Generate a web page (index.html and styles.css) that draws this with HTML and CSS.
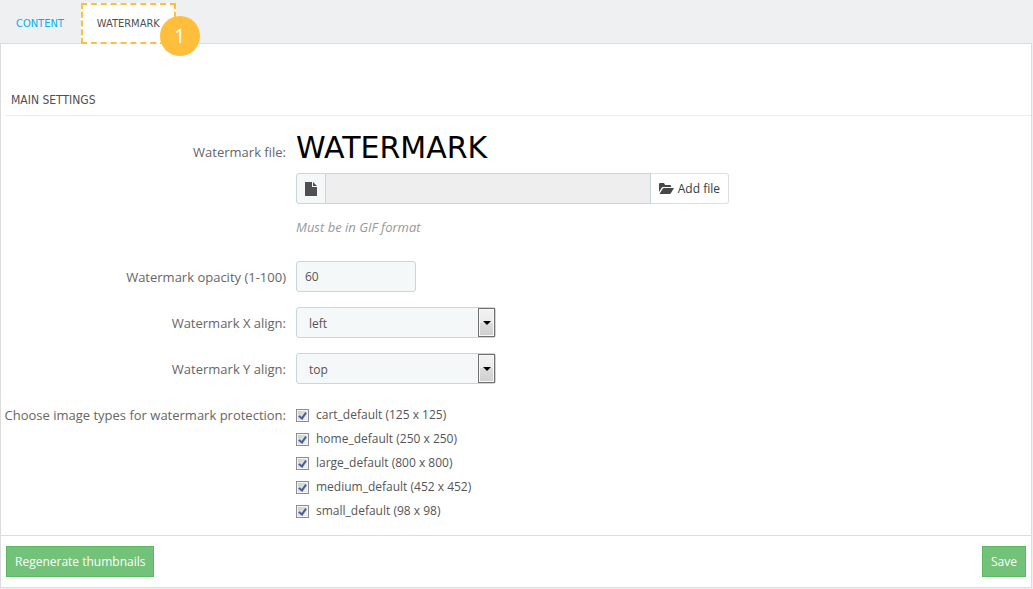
FILE: index.html
```html
<!DOCTYPE html>
<html lang="en">
<head>
<meta charset="utf-8">
<title>Watermark settings</title>
<link rel="stylesheet" href="styles.css">
</head>
<body>
<nav class="tabs">
  <a class="tab" href="#content">CONTENT</a>
  <a class="tab tab-active" href="#watermark">WATERMARK<span class="badge">1</span></a>
</nav>
<form class="panel">
  <h1 class="heading">MAIN SETTINGS</h1>
  <div class="fields">
    <div class="row row-file">
      <label class="label" for="file">Watermark file:</label>
      <div class="field">
        <div class="preview">WATERMARK</div>
        <div class="file-group">
          <span class="file-icon"><svg width="12" height="14" viewBox="0 0 12 14"><path fill="#505050" d="M0 0h7v5h5v9H0zM8 0l4 4H8z"/></svg></span>
          <input class="file-name" id="file" type="text" readonly>
          <button class="add-file" type="button"><svg width="15" height="12" viewBox="0 0 15 12"><path fill="#484848" d="M0 9V1q0-1 1-1h4l1 2h5q1 0 1 1v1H4Q3 4 2.500 5zM.5 11l3-5q.5-1 1.500-1h10l-3 5q-.5 1-1.500 1z"/></svg>Add file</button>
        </div>
        <p class="hint">Must be in GIF format</p>
      </div>
    </div>
    <div class="row">
      <label class="label" for="opacity">Watermark opacity (1-100)</label>
      <div class="field"><input class="opacity" id="opacity" type="text" value="60"></div>
    </div>
    <div class="row">
      <label class="label" for="xalign">Watermark X align:</label>
      <div class="field select-wrap"><select class="select" id="xalign"><option>left</option><option>middle</option><option>right</option></select><span class="arrow"><svg width="8" height="4" viewBox="0 0 8 4"><path d="M0 0h8L4 4z"/></svg></span></div>
    </div>
    <div class="row">
      <label class="label" for="yalign">Watermark Y align:</label>
      <div class="field select-wrap"><select class="select" id="yalign"><option>top</option><option>middle</option><option>bottom</option></select><span class="arrow"><svg width="8" height="4" viewBox="0 0 8 4"><path d="M0 0h8L4 4z"/></svg></span></div>
    </div>
    <div class="row row-types" role="group" aria-labelledby="types">
      <span class="label" id="types">Choose image types for watermark protection:</span>
      <div class="field types">
        <label class="type"><input class="check" type="checkbox" checked>cart_default (125 x 125)</label>
        <label class="type"><input class="check" type="checkbox" checked>home_default (250 x 250)</label>
        <label class="type"><input class="check" type="checkbox" checked>large_default (800 x 800)</label>
        <label class="type"><input class="check" type="checkbox" checked>medium_default (452 x 452)</label>
        <label class="type"><input class="check" type="checkbox" checked>small_default (98 x 98)</label>
      </div>
    </div>
  </div>
  <div class="footer">
    <button class="action" type="button">Regenerate thumbnails</button>
    <button class="action" type="submit">Save</button>
  </div>
</form>
</body>
</html>
```
FILE: styles.css
```css
* { box-sizing: border-box; }
body {
  margin: 0;
  background: #eff0f2;
  color: #666;
  font: 13px/18px "Open Sans", sans-serif;
}
input, select, button { font: inherit; margin: 0; }
svg { display: block; flex: none; }

.tabs {
  display: flex;
  gap: 3px;
  height: 43px;
  padding-top: 3px;
}
.tab {
  display: flex;
  align-items: center;
  height: 41px;
  padding: 0 14px 0 16px;
  color: #00aff0;
  font: 11px/18px "DejaVu Sans Condensed", "Open Sans", sans-serif;
  text-decoration: none;
}
.tab-active {
  position: relative;
  padding: 0 14px;
  background: #fff;
  border: 2px dashed #ffbf3c;
  color: #505050;
}
.badge {
  position: absolute;
  right: -26px;
  bottom: -14px;
  width: 40px;
  height: 40px;
  border-radius: 50%;
  background: #ffbf3c;
  color: #fff;
  font: 20px/40px "Open Sans", sans-serif;
  text-align: center;
}

.panel {
  margin-right: 1px;
  background: #fff;
  border: 1px solid #dcdcdc;
}
.heading {
  margin: 40px 0 0 5px;
  padding: 7px 5px 6px;
  border-bottom: 1px solid #eaedef;
  color: #505050;
  font: 12px/18px "DejaVu Sans Condensed", "Open Sans", sans-serif;
}
.fields {
  display: flex;
  flex-direction: column;
  gap: 15px;
  padding: 12px 3px 15px;
}
.row {
  display: flex;
  align-items: center;
  gap: 10px;
}
.row-file, .row-types { align-items: flex-start; }
.label {
  flex: none;
  width: 282px;
  text-align: right;
}
.row-file .label { padding-top: 15px; }
.row-file { padding-bottom: 10px; }
.preview {
  height: 45px;
  color: #000;
  font: 30px/40px "DejaVu Sans", sans-serif;
}
.file-group {
  display: flex;
  width: 433px;
  height: 31px;
}
.file-icon {
  display: flex;
  align-items: center;
  justify-content: center;
  width: 30px;
  background: #f5f8f9;
  border: 1px solid #c7d6db;
  border-radius: 3px 0 0 3px;
}
.file-name {
  flex: 1;
  min-width: 0;
  background: #eee;
  border: solid #c7d6db;
  border-width: 1px 1px 1px 0;
}
.add-file {
  display: flex;
  align-items: center;
  gap: 4px;
  padding: 0 8px;
  background: #fff;
  border: solid #dedede;
  border-width: 1px 1px 1px 0;
  border-radius: 0 3px 3px 0;
  color: #363a41;
  font-size: 12px;
}
.hint {
  margin: 14px 0 0;
  color: #999;
  font-size: 13px;
  font-style: italic;
}
.opacity, .select {
  display: block;
  height: 31px;
  background: #f5f8f9;
  border: 1px solid #c7d6db;
  border-radius: 3px;
  color: #555;
  font-size: 12px;
}
.opacity {
  width: 120px;
  padding: 0 8px;
}
.select-wrap { position: relative; }
.select {
  width: 200px;
  padding: 2px 12px 0;
  appearance: none;
}
.arrow {
  position: absolute;
  top: 1px;
  right: 1px;
  display: flex;
  align-items: center;
  justify-content: center;
  width: 17px;
  height: 29px;
  background: linear-gradient(#f2f2f2, #ebebeb 50%, #ddd 50%, #cfcfcf);
  border: 1px solid #707070;
  box-shadow: inset 0 0 0 1px #f8f8f8;
  pointer-events: none;
}
.row-types { padding-top: 7px; }
.types {
  display: flex;
  flex-direction: column;
  gap: 6px;
}
.type {
  display: flex;
  align-items: center;
  gap: 7px;
  color: #555;
  font-size: 12px;
}
.check {
  position: relative;
  width: 13px;
  height: 13px;
  appearance: none;
  background: linear-gradient(135deg, #c4c9d0, #f6f6f6);
  border: 1px solid #8e8f8f;
  box-shadow: inset 0 0 0 1px #f4f4f4;
}
.check:checked::after {
  content: "";
  position: absolute;
  left: 3px;
  top: 1px;
  width: 3px;
  height: 6px;
  border: solid #4a5f97;
  border-width: 0 2px 2px 0;
  transform: rotate(35deg);
}
.footer {
  display: flex;
  justify-content: space-between;
  padding: 10px 5px;
  border-top: 1px solid #dcdcdc;
}
.action {
  height: 31px;
  padding: 0 8px;
  background: #72c279;
  border: 1px solid #5bb962;
  color: #fff;
  font-size: 12px;
}
```
